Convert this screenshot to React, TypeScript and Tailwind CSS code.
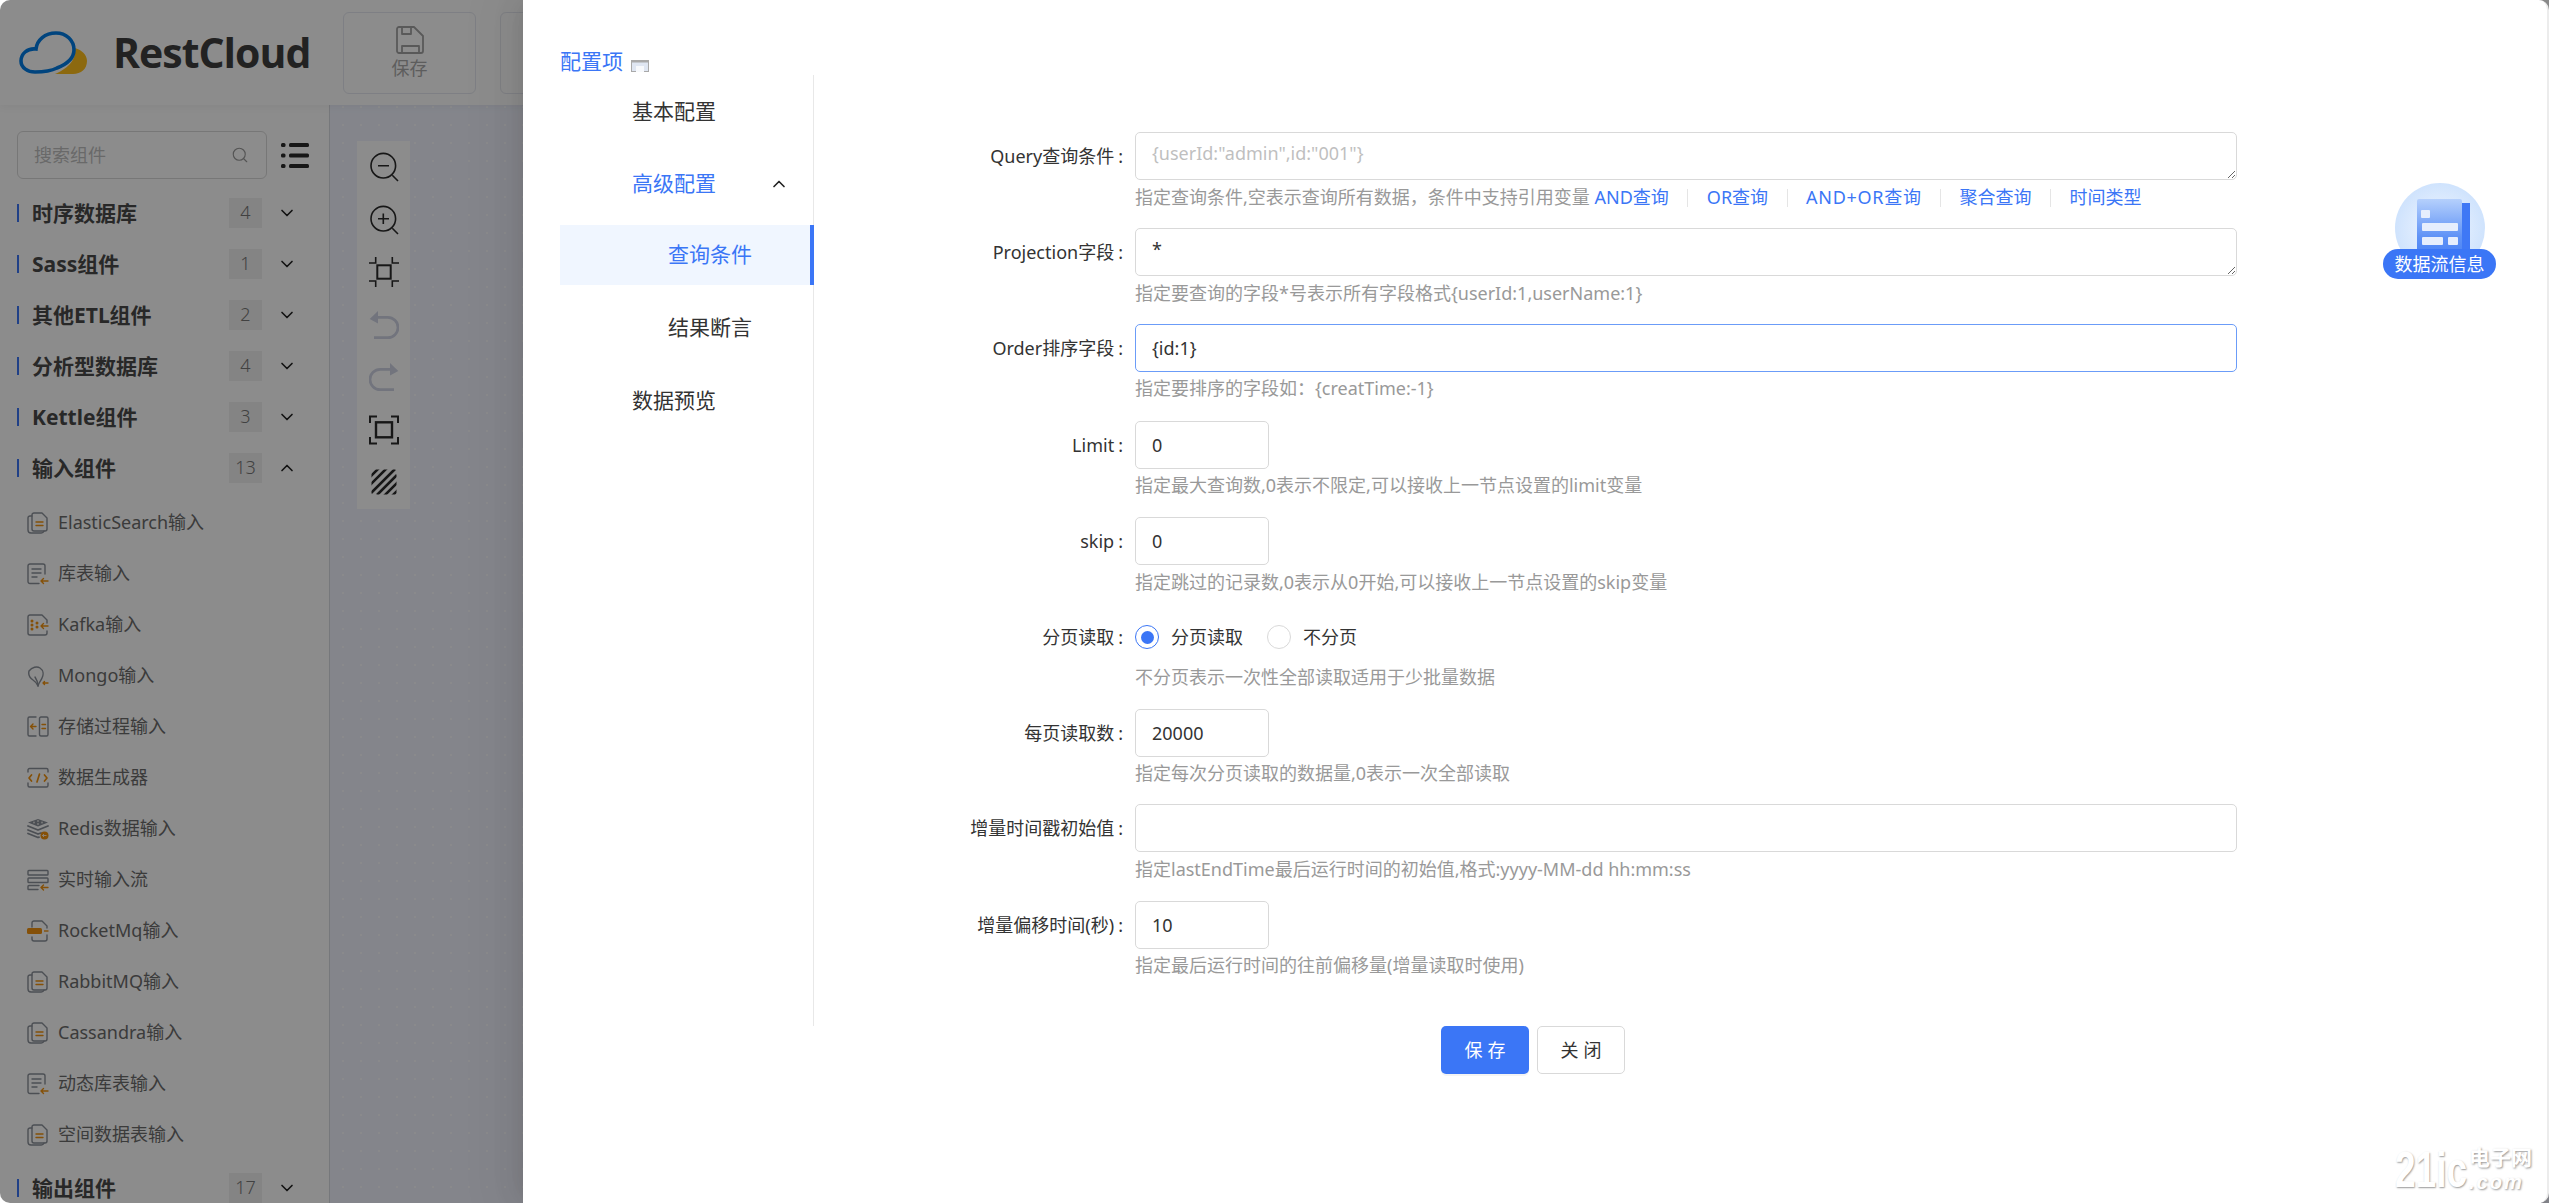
import React from "react";
import { ChevronDown, ChevronUp, Search } from "lucide-react";

const S = "#8a9099";
const O = "#f2930f";

function ItemIcon({ kind }: { kind: string }) {
  const p = { fill: "none", stroke: S, strokeWidth: 1.4, strokeLinecap: "round" as const, strokeLinejoin: "round" as const };
  const a = { fill: "none", stroke: O, strokeWidth: 1.4, strokeLinecap: "round" as const, strokeLinejoin: "round" as const };
  const arrow = <path {...a} d="M21 18h-7M16.5 15.5 14 18l2.5 2.5" />;
  let body: React.ReactNode = null;
  if (kind === "stack") {
    body = (
      <>
        <path {...p} d="M5 4H3a2 2 0 0 0-2 2v12a3 3 0 0 0 3 3h10a3 3 0 0 0 3-2" />
        <path {...p} d="M5 3a2 2 0 0 1 2-2h8l5 5v11a2 2 0 0 1-2 2H7a2 2 0 0 1-2-2z" />
        <path {...a} d="M9 10h7M9 13.500h7" />
      </>
    );
  } else if (kind === "table") {
    body = (
      <>
        <path {...p} d="M12 20.500H3a2 2 0 0 1-2-2V3a2 2 0 0 1 2-2h13a2 2 0 0 1 2 2v8" />
        <path {...p} d="M5 6h9M5 10h9M5 14h5" />
        {arrow}
      </>
    );
  } else if (kind === "kafka") {
    body = (
      <>
        <path {...p} d="M20 9V6l-5-5H3a2 2 0 0 0-2 2v16a2 2 0 0 0 2 2h15a2 2 0 0 0 2-2v-2" />
        <g fill={O}>
          <circle cx="5" cy="7" r="1.500" />
          <circle cx="5" cy="11" r="1.500" />
          <circle cx="5" cy="15" r="1.500" />
          <circle cx="10" cy="9" r="1.500" />
          <circle cx="10" cy="13" r="1.500" />
        </g>
        <path {...a} d="M21 12h-7M16.500 9.500 14 12l2.500 2.500" />
      </>
    );
  } else if (kind === "mongo") {
    body = (
      <>
        <path {...p} d="M2 6c3-4 8-5 11-3 3 2 4 6 2 10-1 3-3 4-4 8-1-3-2-4-5-6C3 13 1 10 2 6z" />
        <path {...p} d="M11 21c0-3-1-6-3-9" />
        <path {...a} d="M21 18h-5M17.500 16.500 16 18l1.500 1.500" />
      </>
    );
  } else if (kind === "proc") {
    body = (
      <>
        <path {...p} d="M9 1H2.500A1.500 1.500 0 0 0 1 2.500v16A1.500 1.500 0 0 0 2.500 20H9" />
        <rect {...p} x="12.500" y="1" width="8.500" height="19" rx="1.500" />
        <path {...a} d="M15 8.500h3.500M15 12.500h3.500" />
        <path {...a} d="M9 10.500H3.500M6 8 3.500 10.500 6 13" />
      </>
    );
  } else if (kind === "code") {
    body = (
      <>
        <path {...p} d="M1 5V3a1.500 1.500 0 0 1 1.500-1.500h17A1.500 1.500 0 0 1 21 3v2M1 16v2.500A1.500 1.500 0 0 0 2.500 20h17a1.500 1.500 0 0 0 1.500-1.500V16" />
        <path {...a} strokeWidth={1.700} d="M4.500 8 2 11l2.500 3M17.500 8l2.500 3-2.500 3M12.500 7l-2.500 8" />
      </>
    );
  } else if (kind === "redis") {
    body = (
      <>
        <path fill={S} d="M11 1 21 4.500 11 8.500 1 4.500z" />
        <g fill="#e4e4e4">
          <circle cx="7" cy="4.500" r="0.900" />
          <circle cx="11" cy="3" r="0.900" />
          <circle cx="11" cy="6" r="0.900" />
          <circle cx="15" cy="4.500" r="0.900" />
        </g>
        <path {...p} strokeWidth={1.800} d="M1 8l10 4 10-4M1 12l10 4 3-1M1 15.500l10 4 1-.4" />
        <circle cx="17.500" cy="17.500" r="4" fill={O} />
        <path d="M19.500 17.500h-4M17 16l-1.500 1.500L17 19" fill="none" stroke="#fff" strokeWidth={0.800} />
      </>
    );
  } else if (kind === "stream") {
    body = (
      <>
        <rect {...p} x="1" y="1.500" width="20" height="4.500" rx="0.800" />
        <rect {...p} x="1" y="9" width="20" height="4.500" rx="0.800" />
        <path {...p} d="M12 16.500H2a1 1 0 0 0-1 1V20a.5.5 0 0 0 .5.500H11" />
        <path {...a} d="M21 18.500h-7M16.500 16 14 18.500l2.500 2.500" />
      </>
    );
  } else if (kind === "rocket") {
    body = (
      <>
        <path {...p} d="M5 7V3a2 2 0 0 1 2-2h8l5 5v2M20 15v4a2 2 0 0 1-2 2H7a2 2 0 0 1-2-2v-2" />
        <rect x="0" y="8" width="15" height="6" rx="1.500" fill={O} />
        <path d="M17 11h4.500" stroke={O} strokeWidth={1.400} />
      </>
    );
  }
  return (
    <svg width="22" height="22" viewBox="0 0 22 22" className="shrink-0">
      {body}
    </svg>
  );
}

const groupsTop = [
  ["时序数据库", "4"],
  ["Sass组件", "1"],
  ["其他ETL组件", "2"],
  ["分析型数据库", "4"],
  ["Kettle组件", "3"],
];

const inputItems = [
  ["ElasticSearch输入", "stack"],
  ["库表输入", "table"],
  ["Kafka输入", "kafka"],
  ["Mongo输入", "mongo"],
  ["存储过程输入", "proc"],
  ["数据生成器", "code"],
  ["Redis数据输入", "redis"],
  ["实时输入流", "stream"],
  ["RocketMq输入", "rocket"],
  ["RabbitMQ输入", "stack"],
  ["Cassandra输入", "stack"],
  ["动态库表输入", "table"],
  ["空间数据表输入", "stack"],
];

function Group({ title, count, open, extra }: { title: string; count: string; open?: boolean; extra?: string }) {
  return (
    <div className={`flex h-[51px] shrink-0 items-center pl-[17px] ${extra ?? ""}`}>
      <span className="h-[18px] w-[2px] bg-[#3b76f6]" />
      <span className="ml-[13px] w-[197px] text-[21px] leading-[30px] font-bold text-[#4a4a4a]">{title}</span>
      <span className="flex h-[30px] w-[33px] items-center justify-center bg-[#f0f0f0] text-[18px] font-light text-[#777]">{count}</span>
      <span className="ml-[15px] text-[#222]">
        {open ? <ChevronUp size={20} strokeWidth={2} /> : <ChevronDown size={20} strokeWidth={2} />}
      </span>
    </div>
  );
}

function ToolIcon({ children, muted }: { children: React.ReactNode; muted?: boolean }) {
  return (
    <div className={`flex h-[52.500px] w-full items-center justify-center ${muted ? "text-[#cfd4e4]" : "text-[#2a2a2a]"}`}>
      <svg width="30" height="30" viewBox="0 0 30 30" fill="none" stroke="currentColor" strokeWidth="1.600">
        {children}
      </svg>
    </div>
  );
}

function HelpText({ children }: { children: React.ReactNode }) {
  return <div className="h-[26px] text-[18px] leading-[26px] whitespace-nowrap text-[#999]">{children}</div>;
}

function Row({ label, h, children }: { label: string; h: string; children: React.ReactNode }) {
  return (
    <div className={`flex ${h}`}>
      <div className="flex h-[48px] w-[309px] shrink-0 items-center justify-end text-[18px] text-[#333]">
        {label}
        <span className="ml-[4px]">:</span>
      </div>
      <div className="ml-[12px] w-[1102px]">{children}</div>
    </div>
  );
}

const inputBase =
  "block h-[48px] rounded-[5px] border-[1.500px] bg-white px-[16px] text-[18px] text-[#333] outline-none placeholder:text-[#bfbfbf]";

function Area({ value, placeholder }: { value?: string; placeholder?: string }) {
  return (
    <textarea
      readOnly
      defaultValue={value}
      placeholder={placeholder}
      className={`${inputBase} w-full resize-y border-[#d9d9d9] py-[6px] leading-[28px]`}
    />
  );
}

function Small({ value }: { value: string }) {
  return <input readOnly defaultValue={value} className={`${inputBase} w-[134px] border-[#d9d9d9]`} />;
}

function Wide({ value, focus }: { value?: string; focus?: boolean }) {
  return <input readOnly defaultValue={value} className={`${inputBase} w-full ${focus ? "border-[#6b9cf8]" : "border-[#d9d9d9]"}`} />;
}

function Sep() {
  return <span className="mx-[18.500px] inline-block h-[18px] w-[1px] bg-[#e5e5e5] align-[-3px]" />;
}

function Radio({ on, label }: { on?: boolean; label: string }) {
  return (
    <span className="flex items-center">
      <span className={`flex h-[24px] w-[24px] items-center justify-center rounded-full border-[1.500px] bg-white ${on ? "border-[#3b76f6]" : "border-[#d9d9d9]"}`}>
        {on ? <span className="h-[13px] w-[13px] rounded-full bg-[#3b76f6]" /> : null}
      </span>
      <span className="ml-[12px] text-[18px] text-[#333]">{label}</span>
    </span>
  );
}

export default function App() {
  return (
    <div className="relative h-screen w-screen overflow-hidden bg-white [font-family:'Noto_Sans','Noto_Sans_CJK_SC',sans-serif]">
      <div className="relative flex h-full flex-col overflow-hidden rounded-l-[10px] bg-white">
        {/* header */}
        <header className="z-10 flex h-[105px] shrink-0 items-center bg-white pl-[19px] shadow-[0_2px_8px_rgba(0,0,0,0.05)]">
          <svg width="68" height="43" viewBox="0 0 68 43" className="shrink-0">
            <path d="M56 17C63 19 68 24 68 30C68 38 62 43 54 43H36C46 39 58 30 56 17Z" fill="#ffbf1c" />
            <path
              d="M17 18C8 17 2 23 2 30C2 37 9 41 16 41C24 41 32 40 38 37C48 33 55 27 55 19C55 9 47 2 37 2C26 2 18 9 17 18Z"
              fill="none"
              stroke="#007ce5"
              strokeWidth="3.600"
            />
          </svg>
          <span className="ml-[26px] w-[230px] text-[41px] leading-none font-bold tracking-[-1px] whitespace-nowrap text-[#3f3f3f] [font-family:'Open_Sans','Liberation_Sans',sans-serif]">
            RestCloud
          </span>
          <div className="flex h-[82px] w-[133px] shrink-0 flex-col items-center justify-center rounded-[6px] border border-[#e6e8f0]">
            <svg width="28" height="28" viewBox="0 0 28 28" fill="none" stroke="#a3a3a3" strokeWidth="1.800" strokeLinejoin="round">
              <path d="M1 3a2 2 0 0 1 2-2h15l9 9v15a2 2 0 0 1-2 2H3a2 2 0 0 1-2-2z" />
              <path d="M6 1v7h9V1M6 27v-7h17v7" />
            </svg>
            <span className="mt-[2px] text-[18px] leading-[24px] text-[#aaa]">保存</span>
          </div>
          <div className="ml-[24px] h-[82px] w-[133px] shrink-0 rounded-[6px] border border-[#e6e8f0]" />
        </header>

        <div className="flex min-h-0 flex-1">
          {/* sidebar */}
          <aside className="flex w-[330px] shrink-0 flex-col overflow-hidden border-r border-[#d8dae0] bg-white">
            <div className="mt-[26px] flex shrink-0 items-center pl-[17px]">
              <div className="flex h-[48px] w-[250px] items-center justify-between rounded-[6px] border-[1.500px] border-[#d9d9d9] pr-[17px] pl-[16px]">
                <span className="text-[18px] text-[#bfbfbf]">搜索组件</span>
                <Search size={18} strokeWidth={1.500} className="text-[#999]" />
              </div>
              <svg width="28" height="25" viewBox="0 0 28 25" className="ml-[14px]" fill="#2a2a2a">
                <rect x="0" y="0" width="4.500" height="4" rx="1.500" />
                <rect x="8" y="0" width="20" height="4" rx="1.500" />
                <rect x="0" y="10.500" width="4.500" height="4" rx="1.500" />
                <rect x="8" y="10.500" width="20" height="4" rx="1.500" />
                <rect x="0" y="21" width="4.500" height="4" rx="1.500" />
                <rect x="8" y="21" width="20" height="4" rx="1.500" />
              </svg>
            </div>
            <div className="mt-[8px] flex flex-col">
              {groupsTop.map(([t, c]) => (
                <Group key={t} title={t} count={c} />
              ))}
              <Group title="输入组件" count="13" open extra="mb-[4px]" />
              {inputItems.map(([t, k]) => (
                <div key={t} className="flex h-[51px] shrink-0 items-center pl-[27px]">
                  <ItemIcon kind={k} />
                  <span className="ml-[9px] text-[18px] whitespace-nowrap text-[#6c6c6c]">{t}</span>
                </div>
              ))}
              <Group title="输出组件" count="17" extra="mt-[2px]" />
            </div>
          </aside>

          {/* canvas */}
          <main className="min-w-0 flex-1 bg-[#f0f3fe] bg-[radial-gradient(circle,#fbfcff_1.500px,transparent_1.500px)] bg-[length:18px_18px] bg-[position:4px_-7px] pt-[36px] pl-[27px]">
            <div className="flex h-[368px] w-[53px] flex-col bg-white">
              <ToolIcon>
                <circle cx="14.300" cy="13.700" r="12.300" />
                <path d="M23.300 23.300 29 29M9 13.700h11" />
              </ToolIcon>
              <ToolIcon>
                <circle cx="14.300" cy="13.700" r="12.300" />
                <path d="M23.300 23.300 29 29M9 13.700h11M14.300 8.500v10.500" />
              </ToolIcon>
              <ToolIcon>
                <path d="M0 6H6.700V0M30 6H23.300V0M0 24H6.700V30M30 24H23.300V30" />
                <rect x="8.300" y="8.300" width="13.400" height="13.400" strokeWidth="2" />
              </ToolIcon>
              <ToolIcon muted>
                <path fill="currentColor" stroke="none" d="M0.700 9 9 1V13.500Z" />
                <path strokeWidth="2.700" d="M8 7.300H18.800A10.200 10.200 0 0 1 18.800 27.700H5" />
              </ToolIcon>
              <ToolIcon muted>
                <path fill="currentColor" stroke="none" d="M29.300 9 21 1V13.500Z" />
                <path strokeWidth="2.700" d="M22 7.300H11.200A10.200 10.200 0 0 0 11.200 27.700H25" />
              </ToolIcon>
              <ToolIcon>
                <path strokeWidth="2" d="M1 8V1.500H8M29 8V1.500H22M1 22V28.500H8M29 22V28.500H22" />
                <rect x="7" y="7.300" width="16" height="15" strokeWidth="2.400" />
              </ToolIcon>
              <ToolIcon>
                <defs>
                  <clipPath id="hatch">
                    <rect x="2.500" y="2.500" width="25" height="25" />
                  </clipPath>
                </defs>
                <g clipPath="url(#hatch)">
                  <path strokeWidth="2.600" d="M0 11 11 0M0 19 19 0M2 26 26 2M8 28 28 8M15 29 29 15M23 29 29 23" />
                </g>
              </ToolIcon>
            </div>
          </main>
        </div>

        {/* mask */}
        <div className="absolute inset-0 z-20 bg-black/45" />
      </div>

      {/* drawer */}
      <div className="absolute inset-y-0 right-0 left-[523px] z-30 rounded-r-[10px] border-r-2 border-[#ececec] bg-white pl-[37px] text-[#333] shadow-[-6px_0_16px_-8px_rgba(0,0,0,0.08),-9px_0_28px_rgba(0,0,0,0.05),-12px_0_48px_16px_rgba(0,0,0,0.03)]">
        <div className="flex h-[75px] items-start pt-[46px]">
          <span className="text-[21px] leading-[30px] text-[#3b76f6]">配置项</span>
          <svg width="18" height="12" viewBox="0 0 18 12" className="mt-[14px] ml-[8px]">
            <rect x="0.500" y="0.500" width="17" height="11" fill="#dfe6f2" stroke="#a9a9a9" />
            <rect x="0" y="0" width="18" height="2.500" fill="#a9a9a9" />
            <rect x="5" y="6" width="8" height="6" fill="#f7f9fc" />
          </svg>
        </div>

        <div className="flex h-[951px]">
          <nav className="flex w-[254px] shrink-0 flex-col gap-[12px] border-r border-[#e8e8e8] pt-[7px] text-[21px]">
            <div className="flex h-[60px] items-center pl-[72px]">基本配置</div>
            <div className="flex h-[60px] items-center justify-between pr-[24px] pl-[72px] text-[#3b76f6]">
              高级配置
              <ChevronUp size={20} strokeWidth={2} className="text-[#222]" />
            </div>
            <div className="mt-[-1px] mr-[-1px] mb-[1px] flex h-[60px] items-center border-r-[4px] border-[#3b76f6] bg-[#f0f6ff] pl-[108px] text-[#3b76f6]">查询条件</div>
            <div className="flex h-[60px] items-center pl-[108px]">结果断言</div>
            <div className="mt-[1px] flex h-[60px] items-center pl-[72px]">数据预览</div>
          </nav>

          <form className="flex flex-col pt-[57px]">
            <Row label="Query查询条件" h="h-[96px]">
              <Area placeholder={'{userId:"admin",id:"001"}'} />
              <div className="mt-[4px]">
                <HelpText>
                  指定查询条件,空表示查询所有数据，条件中支持引用变量{" "}
                  <span className="text-[#3b76f6]">AND查询</span>
                  <Sep />
                  <span className="text-[#3b76f6]">OR查询</span>
                  <Sep />
                  <span className="tracking-[0.700px] text-[#3b76f6]">AND+OR查询</span>
                  <Sep />
                  <span className="text-[#3b76f6]">聚合查询</span>
                  <Sep />
                  <span className="text-[#3b76f6]">时间类型</span>
                </HelpText>
              </div>
            </Row>
            <Row label="Projection字段" h="h-[96px]">
              <Area value="*" />
              <div className="mt-[4px]">
                <HelpText>指定要查询的字段*号表示所有字段格式{"{userId:1,userName:1}"}</HelpText>
              </div>
            </Row>
            <Row label="Order排序字段" h="h-[97px]">
              <Wide value="{id:1}" focus />
              <div className="mt-[3px]">
                <HelpText>指定要排序的字段如：{"{creatTime:-1}"}</HelpText>
              </div>
            </Row>
            <Row label="Limit" h="h-[96px]">
              <Small value="0" />
              <div className="mt-[3px]">
                <HelpText>指定最大查询数,0表示不限定,可以接收上一节点设置的limit变量</HelpText>
              </div>
            </Row>
            <Row label="skip" h="h-[96px]">
              <Small value="0" />
              <div className="mt-[4px]">
                <HelpText>指定跳过的记录数,0表示从0开始,可以接收上一节点设置的skip变量</HelpText>
              </div>
            </Row>
            <Row label="分页读取" h="h-[96px]">
              <div className="flex h-[48px] items-center gap-[24px]">
                <Radio on label="分页读取" />
                <Radio label="不分页" />
              </div>
              <div className="mt-[3px]">
                <HelpText>不分页表示一次性全部读取适用于少批量数据</HelpText>
              </div>
            </Row>
            <Row label="每页读取数" h="h-[95px]">
              <Small value="20000" />
              <div className="mt-[3px]">
                <HelpText>指定每次分页读取的数据量,0表示一次全部读取</HelpText>
              </div>
            </Row>
            <Row label="增量时间戳初始值" h="h-[97px]">
              <Wide />
              <div className="mt-[4px]">
                <HelpText>指定lastEndTime最后运行时间的初始值,格式:yyyy-MM-dd hh:mm:ss</HelpText>
              </div>
            </Row>
            <Row label="增量偏移时间(秒)" h="h-[96px]">
              <Small value="10" />
              <div className="mt-[3px]">
                <HelpText>指定最后运行时间的往前偏移量(增量读取时使用)</HelpText>
              </div>
            </Row>
          </form>
        </div>

        <div className="flex justify-center gap-[8px] pr-[41px]">
          <button className="h-[48px] w-[88px] rounded-[5px] bg-[#3b76f6] pl-[5px] text-[18px] tracking-[5px] text-white shadow-[0_2px_0_rgba(0,0,0,0.045)]">保存</button>
          <button className="h-[48px] w-[88px] rounded-[5px] border-[1.500px] border-[#d9d9d9] bg-white pl-[5px] text-[18px] tracking-[5px] text-[#333]">关闭</button>
        </div>

        {/* data flow info floating button */}
        <div className="absolute top-[183px] right-[51px] flex w-[113px] flex-col items-center">
          <svg width="90" height="90" viewBox="0 0 90 90">
            <defs>
              <radialGradient id="halo">
                <stop offset="0" stopColor="#f2f7ff" />
                <stop offset="1" stopColor="#cfe3fd" />
              </radialGradient>
              <linearGradient id="sheet" x1="0" y1="0" x2="0" y2="1">
                <stop offset="0" stopColor="#b5d0fc" />
                <stop offset="0.700" stopColor="#5f92f6" />
                <stop offset="1" stopColor="#4c84f5" />
              </linearGradient>
            </defs>
            <circle cx="45" cy="45" r="45" fill="url(#halo)" />
            <rect x="67" y="20" width="8" height="50" fill="#3f78f5" />
            <rect x="22" y="16" width="45" height="54" rx="2" fill="url(#sheet)" />
            <g fill="#e6eefd">
              <rect x="26" y="27" width="9" height="8" rx="1" />
              <rect x="27" y="40" width="36" height="8" rx="1" />
              <rect x="27" y="54" width="21" height="8" rx="1" />
              <rect x="53" y="54" width="10" height="8" rx="1" />
            </g>
          </svg>
          <div className="mt-[-24px] flex h-[30px] w-[113px] items-center justify-center rounded-[15px] bg-[#3b76f6] text-[18px] whitespace-nowrap text-white">
            数据流信息
          </div>
        </div>

        {/* watermark */}
        <div className="absolute right-[10px] bottom-[9px] flex items-center text-white [font-family:'Liberation_Sans','Noto_Sans_CJK_SC',sans-serif] [text-shadow:1px_1px_2px_#999]">
          <span className="w-[74px] origin-left scale-x-[0.74] text-[50px] leading-[40px] font-bold">21ic</span>
          <span className="flex w-[68px] flex-col">
            <span className="text-[21px] leading-[24px] font-bold">电子网</span>
            <span className="text-[20px] leading-[24px] font-bold tracking-[2px] italic">.com</span>
          </span>
        </div>
      </div>
    </div>
  );
}
